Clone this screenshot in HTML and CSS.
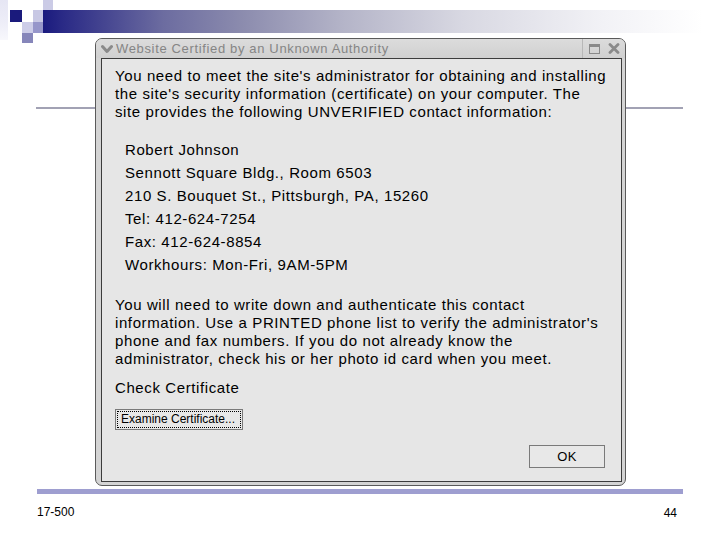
FILE: index.html
```html
<!DOCTYPE html>
<html>
<head>
<meta charset="utf-8">
<link rel="stylesheet" href="styles.css">
</head>
<body>
<div class="slide">
  <div class="header">
    <div class="bar"></div>
    <div class="squares">
      <span class="sq s-a"></span>
      <span class="sq s-b"></span>
      <span class="sq s-c"></span>
      <span class="sq s-d"></span>
      <span class="sq s-e"></span>
      <span class="sq s-f"></span>
      <span class="sq s-g"></span>
    </div>
  </div>
  <div class="rule"></div>
  <div class="bottom-rule"></div>
  <div class="footer">
    <span class="course">17-500</span>
    <span class="page">44</span>
  </div>

  <div class="window">
    <div class="titlebar">
      <svg class="chev" width="12" height="10" viewBox="0 0 12 10"><path d="M1.5 2.5 L6 7.5 L10.5 2.5" fill="none" stroke="#8a8a8a" stroke-width="3" stroke-linejoin="round" stroke-linecap="round"/></svg>
      <span class="title">Website Certified by an Unknown Authority</span>
      <span class="sep"></span>
      <svg class="tb-btn" width="11" height="10" viewBox="0 0 11 10"><rect x="0.5" y="0.5" width="10" height="9" fill="none" stroke="#8a8a8a"/><rect x="0.5" y="0.5" width="10" height="2.5" fill="#8a8a8a"/></svg>
      <svg class="tb-btn close" width="12" height="11" viewBox="0 0 12 11"><path d="M2 1.5 L10 9.5 M10 1.5 L2 9.5" stroke="#8a8a8a" stroke-width="2.8" stroke-linecap="round"/></svg>
    </div>
    <div class="client">
      <p class="para">You need to meet the site's administrator for obtaining and installing the site's security information (certificate) on your computer. The site provides the following UNVERIFIED contact information:</p>
      <ul class="contact">
        <li>Robert Johnson</li>
        <li>Sennott Square Bldg., Room 6503</li>
        <li>210 S. Bouquet St., Pittsburgh, PA, 15260</li>
        <li>Tel: 412-624-7254</li>
        <li>Fax: 412-624-8854</li>
        <li>Workhours: Mon-Fri, 9AM-5PM</li>
      </ul>
      <p class="para">You will need to write down and authenticate this contact information. Use a PRINTED phone list to verify the administrator's phone and fax numbers. If you do not already know the administrator, check his or her photo id card when you meet.</p>
      <p class="check">Check Certificate</p>
      <div class="examine"><span class="examine-inner">Examine Certificate...</span></div>
      <div class="actions"><span class="ok">OK</span></div>
    </div>
  </div>
</div>
</body>
</html>
```
FILE: styles.css
```css
* { box-sizing: border-box; }
html, body { margin: 0; padding: 0; background: #ffffff; }
body { font-family: "Liberation Sans", Arial, sans-serif; color: #000; }

.slide {
  width: 720px;
  height: 540px;
  position: relative;
  overflow: hidden;
  display: flex;
  flex-direction: column;
}

.header { height: 43px; position: relative; }
.bar {
  margin: 10px 0 0 43px;
  height: 23px;
  background: linear-gradient(to right, #1a1a7e 0px, #2a2a86 20px, #6c6ca0 120px, #8c8cae 200px, #b4b4c8 300px, #d8d8e2 420px, #f2f2f6 560px, #ffffff 660px);
}
.squares { position: absolute; left: 0; top: 0; width: 54px; height: 43px; }
.sq { position: absolute; display: block; }
.s-a { left: 0; top: 0; width: 8px; height: 40px; background: linear-gradient(to bottom, #e6e6f4, #eeeef8 60%, #f8f8fc); }
.s-b { left: 10px; top: 10px; width: 12px; height: 12px; background: #1a1a7c; }
.s-c { left: 33px; top: 10px; width: 10px; height: 12px; background: #c8c8e4; }
.s-d { left: 43px; top: 0; width: 10px; height: 10px; background: #cbcbe6; }
.s-e { left: 22px; top: 22px; width: 11px; height: 11px; background: #cdcde8; }
.s-f { left: 33px; top: 22px; width: 10px; height: 11px; background: #9696ca; }
.s-g { left: 22px; top: 33px; width: 11px; height: 10px; background: #8686ba; }

.rule { margin: 64px 37px 0 36px; height: 2px; background: #a2a2b4; }
.bottom-rule { margin: 380px 37px 0 37px; height: 5px; background: #9e9ed0; }
.footer {
  display: flex;
  justify-content: space-between;
  padding: 11px 43px 0 37px;
  font-size: 12px;
  line-height: 14px;
}
.page { padding-top: 1px; }

.window {
  position: absolute;
  left: 95px;
  top: 38px;
  width: 531px;
  height: 448px;
  border: 1px solid #5a5a5a;
  border-radius: 7px;
  background: #d4d4d4;
  padding: 0 3px 3px 5px;
  display: flex;
  flex-direction: column;
}
.titlebar {
  height: 19px;
  display: flex;
  align-items: center;
  background: linear-gradient(to bottom, #dcdcdc, #d0d0d0);
  border-radius: 6px 6px 0 0;
  margin: 0 -3px 0 -5px;
  padding: 0 5px 0 5px;
}
.chev { margin-right: 3px; margin-top: 1px; }
.title { font-size: 13px; letter-spacing: 0.65px; color: #858585; flex: 1; line-height: 19px; }
.sep { width: 1px; height: 19px; background: #b8b8b8; margin-right: 6px; }
.tb-btn { margin-right: 8px; }
.tb-btn.close { margin-right: 0; }

.client {
  flex: 1;
  background: #e6e6e6;
  border: 1px solid #3c3c3c;
  padding: 8px 13px 0 13px;
  display: flex;
  flex-direction: column;
  font-size: 15px;
  letter-spacing: 0.6px;
}
.para { margin: 0; line-height: 18px; }
.contact {
  list-style: none;
  margin: 17px 0 20px 0;
  padding: 0 0 0 10px;
  line-height: 23px;
}
.check { margin: 11px 0 0 0; line-height: 18px; }
.examine {
  margin-top: 12px;
  width: 128px;
  height: 21px;
  border: 1px solid #7a7a7a;
  padding: 1px;
  background: #e8e8e8;
  letter-spacing: 0;
}
.examine-inner {
  display: block;
  height: 17px;
  border: 1px dotted #000;
  font-size: 12px;
  line-height: 15px;
  padding-left: 3px;
}
.actions {
  display: flex;
  justify-content: flex-end;
  margin-top: 15px;
  padding-right: 3px;
}
.ok {
  width: 76px;
  height: 23px;
  border: 1px solid #7a7a7a;
  font-size: 13px;
  letter-spacing: 0.3px;
  line-height: 21px;
  text-align: center;
  background: #e8e8e8;
}
```
